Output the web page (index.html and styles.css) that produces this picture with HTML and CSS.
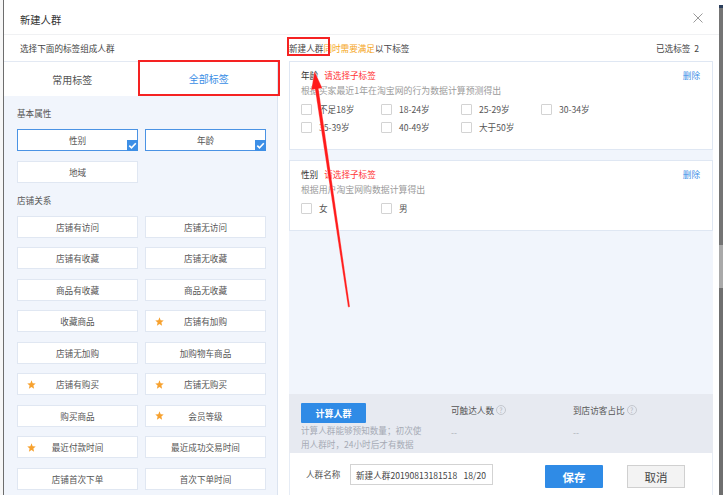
FILE: index.html
```html
<!DOCTYPE html>
<html lang="zh-CN">
<head>
<meta charset="utf-8">
<title>新建人群</title>
<link rel="stylesheet" href="styles.css">
</head>
<body>
<div class="screen">
  <div class="edge"></div>
  <div class="modal">
    <div class="modal-hd">
      <span class="title">新建人群</span>
      <svg class="close" width="10" height="10" viewBox="0 0 10 10"><path d="M0.5 0.5L9.5 9.5M9.5 0.5L0.5 9.5" stroke="#9a9a9a" stroke-width="1" fill="none"/></svg>
    </div>
    <div class="subhd">
      <div class="subhd-left">选择下面的标签组成人群</div>
      <div class="subhd-right"><span class="mark">新建人群</span><span class="orange">同时需要满足</span><span>以下标签</span><span class="count">已选标签&nbsp;&nbsp;2</span></div>
    </div>
    <div class="body">
      <aside class="left">
        <div class="tabs">
          <div class="tab">常用标签</div>
          <div class="tab active">全部标签</div>
        </div>
        <div class="left-body">
          <div class="sec">基本属性</div>
          <div class="grid">
            <div class="tag sel">性别<i class="chk"><svg width="11" height="11" viewBox="0 0 11 11"><path d="M2.3 5.6L4.5 7.8L8.8 3.2" stroke="#fff" stroke-width="1.6" fill="none"/></svg></i></div>
            <div class="tag sel">年龄<i class="chk"><svg width="11" height="11" viewBox="0 0 11 11"><path d="M2.3 5.6L4.5 7.8L8.8 3.2" stroke="#fff" stroke-width="1.6" fill="none"/></svg></i></div>
            <div class="tag">地域</div>
          </div>
          <div class="sec">店铺关系</div>
          <div class="grid">
            <div class="tag">店铺有访问</div>
            <div class="tag">店铺无访问</div>
            <div class="tag">店铺有收藏</div>
            <div class="tag">店铺无收藏</div>
            <div class="tag">商品有收藏</div>
            <div class="tag">商品无收藏</div>
            <div class="tag">收藏商品</div>
            <div class="tag"><svg class="star" width="9" height="9" viewBox="0 0 10 10"><polygon points="5,0.4 6.3,3.6 9.7,3.9 7.1,6.1 7.9,9.6 5,7.7 2.1,9.6 2.9,6.1 0.3,3.9 3.7,3.6" fill="#f7a12e"/></svg>店铺有加购</div>
            <div class="tag">店铺无加购</div>
            <div class="tag">加购物车商品</div>
            <div class="tag"><svg class="star" width="9" height="9" viewBox="0 0 10 10"><polygon points="5,0.4 6.3,3.6 9.7,3.9 7.1,6.1 7.9,9.6 5,7.7 2.1,9.6 2.9,6.1 0.3,3.9 3.7,3.6" fill="#f7a12e"/></svg>店铺有购买</div>
            <div class="tag"><svg class="star" width="9" height="9" viewBox="0 0 10 10"><polygon points="5,0.4 6.3,3.6 9.7,3.9 7.1,6.1 7.9,9.6 5,7.7 2.1,9.6 2.9,6.1 0.3,3.9 3.7,3.6" fill="#f7a12e"/></svg>店铺无购买</div>
            <div class="tag">购买商品</div>
            <div class="tag"><svg class="star" width="9" height="9" viewBox="0 0 10 10"><polygon points="5,0.4 6.3,3.6 9.7,3.9 7.1,6.1 7.9,9.6 5,7.7 2.1,9.6 2.9,6.1 0.3,3.9 3.7,3.6" fill="#f7a12e"/></svg>会员等级</div>
            <div class="tag"><svg class="star" width="9" height="9" viewBox="0 0 10 10"><polygon points="5,0.4 6.3,3.6 9.7,3.9 7.1,6.1 7.9,9.6 5,7.7 2.1,9.6 2.9,6.1 0.3,3.9 3.7,3.6" fill="#f7a12e"/></svg>最近付款时间</div>
            <div class="tag">最近成功交易时间</div>
            <div class="tag">店铺首次下单</div>
            <div class="tag">首次下单时间</div>
          </div>
        </div>
      </aside>
      <section class="right">
        <div class="cards">
          <div class="card">
            <div class="card-hd"><span class="name">年龄</span><span class="warn">请选择子标签</span><span class="del">删除</span></div>
            <div class="desc">根据买家最近1年在淘宝网的行为数据计算预测得出</div>
            <div class="opts">
              <label class="opt"><span class="box"></span>不足18岁</label>
              <label class="opt"><span class="box"></span>18-24岁</label>
              <label class="opt"><span class="box"></span>25-29岁</label>
              <label class="opt"><span class="box"></span>30-34岁</label>
              <label class="opt"><span class="box"></span>35-39岁</label>
              <label class="opt"><span class="box"></span>40-49岁</label>
              <label class="opt"><span class="box"></span>大于50岁</label>
            </div>
          </div>
          <div class="card">
            <div class="card-hd"><span class="name">性别</span><span class="warn">请选择子标签</span><span class="del">删除</span></div>
            <div class="desc">根据用户淘宝网购数据计算得出</div>
            <div class="opts">
              <label class="opt"><span class="box"></span>女</label>
              <label class="opt"><span class="box"></span>男</label>
            </div>
          </div>
        </div>
        <div class="calc">
          <div class="calc-main">
            <div class="btn-calc">计算人群</div>
            <div class="calc-tip">计算人群能够预知数量；初次使<br>用人群时，24小时后才有数据</div>
          </div>
          <div class="stat">
            <div class="stat-label">可触达人数<span class="q">?</span></div>
            <div class="stat-val">--</div>
          </div>
          <div class="stat">
            <div class="stat-label">到店访客占比<span class="q">?</span></div>
            <div class="stat-val">--</div>
          </div>
        </div>
        <div class="footer">
          <span class="fl-label">人群名称</span>
          <div class="input"><span>新建人群20190813181518</span><span>18/20</span></div>
          <div class="btn-save">保存</div>
          <div class="btn-cancel">取消</div>
        </div>
      </section>
    </div>
  </div>
  <div class="backdrop"></div>
  <svg class="arrow" width="723" height="495" viewBox="0 0 723 495">
    <polygon points="314.5,71 322.4,88.2 318.6,88.7 350,306.9 348,307.2 315,89.3 311.2,89.9" fill="#ff1a1a" stroke="#ffffff" stroke-opacity="0.5" stroke-width="0.6" stroke-linejoin="round"/>
  </svg>
</div>
</body>
</html>
```

FILE: styles.css
```css
html, body {
  margin: 0;
  padding: 0;
}
body {
  width: 723px;
  height: 495px;
  overflow: hidden;
  background: #fff;
  font-family: "Noto Sans CJK SC", "Noto Sans", sans-serif;
  font-size: 8.6px;
  color: #333;
}
.screen {
  position: relative;
  display: flex;
  width: 723px;
  height: 495px;
  overflow: hidden;
}
.edge {
  flex: none;
  width: 3px;
  border-right: 1px solid #6d6d6d;
  background: #f7f7f7;
}
.modal {
  flex: none;
  width: 715px;
  display: flex;
  flex-direction: column;
  background: #fff;
}
.backdrop {
  flex: 1;
  background: linear-gradient(to bottom, #ffffff 0, #ffffff 5px, #2b3f5c 5px, #2b3f5c 8px, #747474 8px, #747474 245px, #a9a9a9 245px, #a9a9a9 288px, #6f6f6f 288px);
}

/* header */
.modal-hd {
  height: 35px;
  box-sizing: border-box;
  border-bottom: 1px solid #f0f1f3;
  padding: 13px 16px 0 16px;
  display: flex;
  align-items: flex-start;
  justify-content: space-between;
}
.title {
  font-size: 10.3px;
  line-height: 14px;
  color: #333;
}
.close {
  display: block;
}
.subhd {
  height: 26px;
  display: flex;
  align-items: center;
}
.subhd-left {
  width: 285px;
  padding-left: 16px;
  box-sizing: border-box;
  color: #444;
}
.subhd-right {
  flex: 1;
  display: flex;
  align-items: center;
  padding-right: 20px;
  color: #444;
}
.mark {
  position: relative;
  display: inline-block;
  line-height: 14px;
}
.mark::after {
  content: "";
  position: absolute;
  left: -2px;
  right: -6.5px;
  top: -4px;
  bottom: -1px;
  border: 2px solid #f52222;
}
.orange {
  color: #f5a623;
}
.count {
  margin-left: auto;
}

/* body */
.body {
  flex: 1;
  display: flex;
  min-height: 0;
}
.left {
  flex: none;
  width: 274px;
  box-sizing: border-box;
  border-top: 1px solid #e3e9f3;
  border-right: 1px solid #dce4f0;
  background: #f1f5fc;
  display: flex;
  flex-direction: column;
}
.tabs {
  display: flex;
  height: 34px;
  background: #fff;
}
.tab {
  flex: 1;
  display: flex;
  align-items: center;
  justify-content: center;
  font-size: 10px;
  color: #555;
  box-sizing: border-box;
}
.tab.active {
  position: relative;
  color: #3a8ee6;
  border-bottom: 2px solid #3a8ee6;
}
.tab.active::after {
  content: "";
  position: absolute;
  left: -3px;
  right: -3px;
  top: -2px;
  bottom: -2px;
  border: 2px solid #f52222;
}
.left-body {
  flex: 1;
  padding: 8px 12px 0 13px;
}
.sec {
  line-height: 18px;
  color: #555;
}
.grid + .sec {
  margin-top: 8px;
}
.grid {
  margin-top: 7px;
  display: grid;
  grid-template-columns: 121px 121px;
  column-gap: 7px;
  row-gap: 9.5px;
}
.tag {
  position: relative;
  height: 22px;
  box-sizing: border-box;
  background: #fff;
  border: 1px solid #e0e7f2;
  display: flex;
  align-items: center;
  justify-content: center;
  color: #555;
}
.tag.sel {
  border-color: #4b93e4;
}
.chk {
  position: absolute;
  right: -1px;
  bottom: -1px;
  width: 11px;
  height: 11px;
  background: #3d8fe6;
}
.chk svg {
  display: block;
}
.star {
  position: absolute;
  left: 9px;
  top: 5.5px;
}

/* right */
.right {
  flex: none;
  width: 424px;
  margin-left: 11px;
  display: flex;
  flex-direction: column;
}
.cards {
  flex: 1;
  background: #f1f5fc;
}
.card {
  background: #fff;
  border: 1px solid #dfe7f3;
  padding: 6px 12px 13px 11px;
}
.card + .card {
  margin-top: 10px;
}
.card-hd {
  display: flex;
  align-items: center;
  line-height: 14px;
}
.name {
  color: #333;
}
.warn {
  color: #ff3434;
  margin-left: 6px;
}
.del {
  margin-left: auto;
  color: #3a8ee6;
}
.desc {
  margin-top: 2px;
  line-height: 14px;
  font-size: 8.9px;
  color: #9b9b9b;
}
.opts {
  margin-top: 2px;
  display: grid;
  grid-template-columns: repeat(4, 80px);
}
.opt {
  height: 18px;
  display: flex;
  align-items: center;
  color: #555;
}
.box {
  width: 11px;
  height: 11px;
  box-sizing: border-box;
  border: 1px solid #d3d3d3;
  border-radius: 1px;
  background: #fff;
  margin-right: 7px;
}
.calc {
  height: 59px;
  box-sizing: border-box;
  background: #e7eaf1;
  padding: 9px 12px 0 12px;
  display: flex;
}
.calc-main {
  width: 150px;
}
.btn-calc {
  width: 65px;
  height: 20px;
  background: #2f8be6;
  color: #fff;
  font-size: 9px;
  font-weight: bold;
  display: flex;
  align-items: center;
  justify-content: center;
  border-radius: 1px;
}
.calc-tip {
  margin-top: 1px;
  line-height: 13.5px;
  color: #a6abb5;
}
.stat {
  width: 122px;
}
.stat-label {
  line-height: 14px;
  color: #555;
  display: flex;
  align-items: center;
}
.q {
  display: inline-flex;
  align-items: center;
  justify-content: center;
  width: 10px;
  height: 10px;
  box-sizing: border-box;
  border: 1px solid #c3c7ce;
  border-radius: 50%;
  font-size: 7px;
  color: #b5b9c0;
  margin-left: 2px;
}
.stat-val {
  margin-top: 8px;
  line-height: 14px;
  color: #a9adb5;
}
.footer {
  height: 42px;
  box-sizing: border-box;
  padding: 11px 0 0 16px;
  border-left: 1px solid #e6ecf5;
  border-right: 1px solid #e6ecf5;
  display: flex;
  align-items: flex-start;
}
.fl-label {
  width: 44px;
  line-height: 21px;
  color: #555;
}
.input {
  width: 143px;
  height: 21px;
  box-sizing: border-box;
  border: 1px solid #d3d3d3;
  padding: 0 6px 0 5px;
  display: flex;
  align-items: center;
  justify-content: space-between;
  color: #444;
}
.btn-save {
  margin-left: 52px;
  margin-top: 1px;
  width: 58px;
  height: 23px;
  background: #2f8be6;
  color: #fff;
  font-size: 11.5px;
  font-weight: bold;
  display: flex;
  align-items: center;
  justify-content: center;
  border-radius: 1px;
}
.btn-cancel {
  margin-left: 24px;
  margin-top: 1px;
  width: 58px;
  height: 23px;
  box-sizing: border-box;
  background: #f3f3f3;
  border: 1px solid #d0d0d0;
  color: #444;
  font-size: 11.5px;
  display: flex;
  align-items: center;
  justify-content: center;
}
.arrow {
  position: absolute;
  left: 0;
  top: 0;
  pointer-events: none;
}
```
